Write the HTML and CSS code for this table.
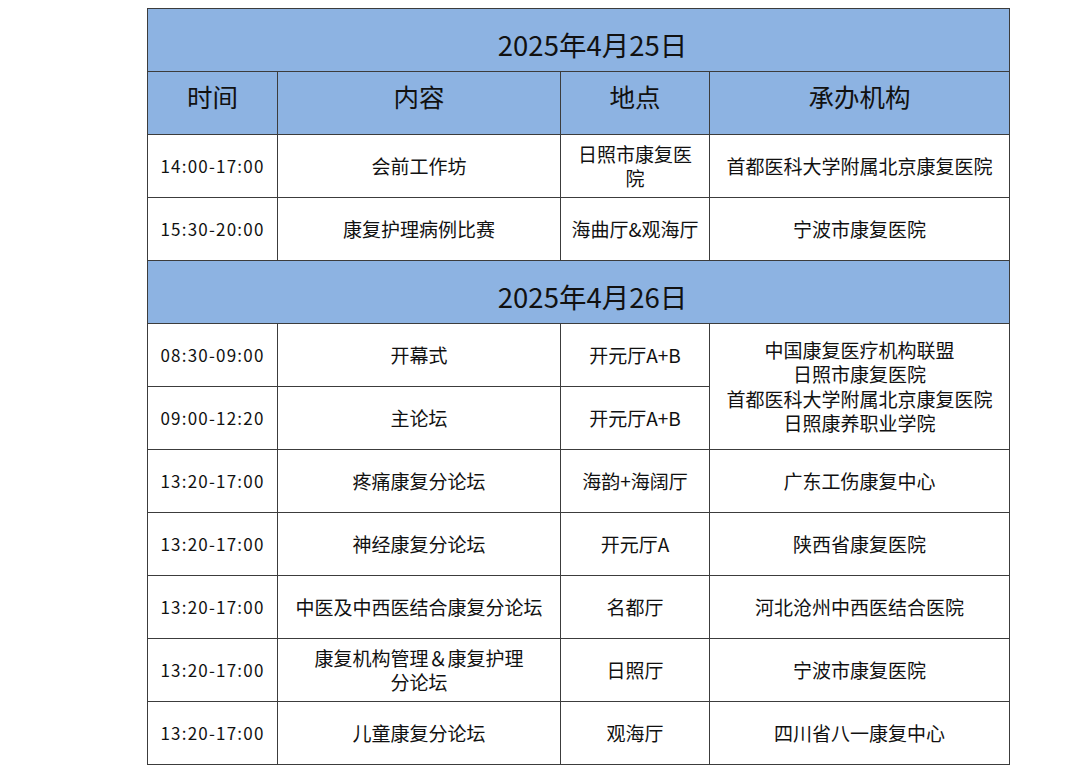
FILE: index.html
```html
<!DOCTYPE html>
<html lang="zh-CN">
<head>
<meta charset="utf-8">
<title>日程</title>
<link rel="stylesheet" href="styles.css">
</head>
<body>
<table class="schedule">
  <colgroup>
    <col class="c-time">
    <col class="c-content">
    <col class="c-place">
    <col class="c-org">
  </colgroup>
  <tbody>
    <tr class="date-row"><td colspan="4">2025年4月25日</td></tr>
    <tr class="head-row"><td>时间</td><td>内容</td><td>地点</td><td>承办机构</td></tr>
    <tr><td class="time">14:00-17:00</td><td>会前工作坊</td><td class="multi">日照市康复医<br>院</td><td>首都医科大学附属北京康复医院</td></tr>
    <tr><td class="time">15:30-20:00</td><td>康复护理病例比赛</td><td>海曲厅&amp;观海厅</td><td>宁波市康复医院</td></tr>
    <tr class="date-row"><td colspan="4">2025年4月26日</td></tr>
    <tr><td class="time">08:30-09:00</td><td>开幕式</td><td>开元厅A+B</td><td rowspan="2" class="multi wide">中国康复医疗机构联盟<br>日照市康复医院<br>首都医科大学附属北京康复医院<br>日照康养职业学院</td></tr>
    <tr><td class="time">09:00-12:20</td><td>主论坛</td><td>开元厅A+B</td></tr>
    <tr><td class="time">13:20-17:00</td><td>疼痛康复分论坛</td><td>海韵+海阔厅</td><td>广东工伤康复中心</td></tr>
    <tr><td class="time">13:20-17:00</td><td>神经康复分论坛</td><td>开元厅A</td><td>陕西省康复医院</td></tr>
    <tr><td class="time">13:20-17:00</td><td>中医及中西医结合康复分论坛</td><td>名都厅</td><td>河北沧州中西医结合医院</td></tr>
    <tr><td class="time">13:20-17:00</td><td class="multi">康复机构管理＆康复护理<br>分论坛</td><td>日照厅</td><td>宁波市康复医院</td></tr>
    <tr><td class="time">13:20-17:00</td><td>儿童康复分论坛</td><td>观海厅</td><td>四川省八一康复中心</td></tr>
  </tbody>
</table>
</body>
</html>
```
FILE: styles.css
```css
html, body {
  margin: 0;
  padding: 0;
  background: #ffffff;
}

body {
  font-family: "Noto Sans CJK SC", "Noto Sans", sans-serif;
  color: #111111;
}

.schedule {
  border-collapse: collapse;
  table-layout: fixed;
  width: 862px;
  margin: 8px 0 0 147px;
}

.c-time { width: 130px; }
.c-content { width: 283px; }
.c-place { width: 149px; }
.c-org { width: 300px; }

.schedule td {
  border: 1.5px solid #3c3c3c;
  height: 63px;
  padding: 0 8px;
  text-align: center;
  vertical-align: middle;
  font-size: 19px;
  line-height: 24px;
  box-sizing: border-box;
}

.schedule .date-row td {
  background: #8db3e2;
  font-size: 27.5px;
  line-height: 30px;
  padding-top: 8px;
  padding-left: 36px;
}

.schedule .head-row td {
  background: #8db3e2;
  font-size: 25.5px;
  line-height: 30px;
  padding-bottom: 14px;
}

.schedule td.time {
  font-size: 17px;
  letter-spacing: 1.2px;
  padding: 0 4px;
}

.schedule td.wide {
  line-height: 24.5px;
}
```
